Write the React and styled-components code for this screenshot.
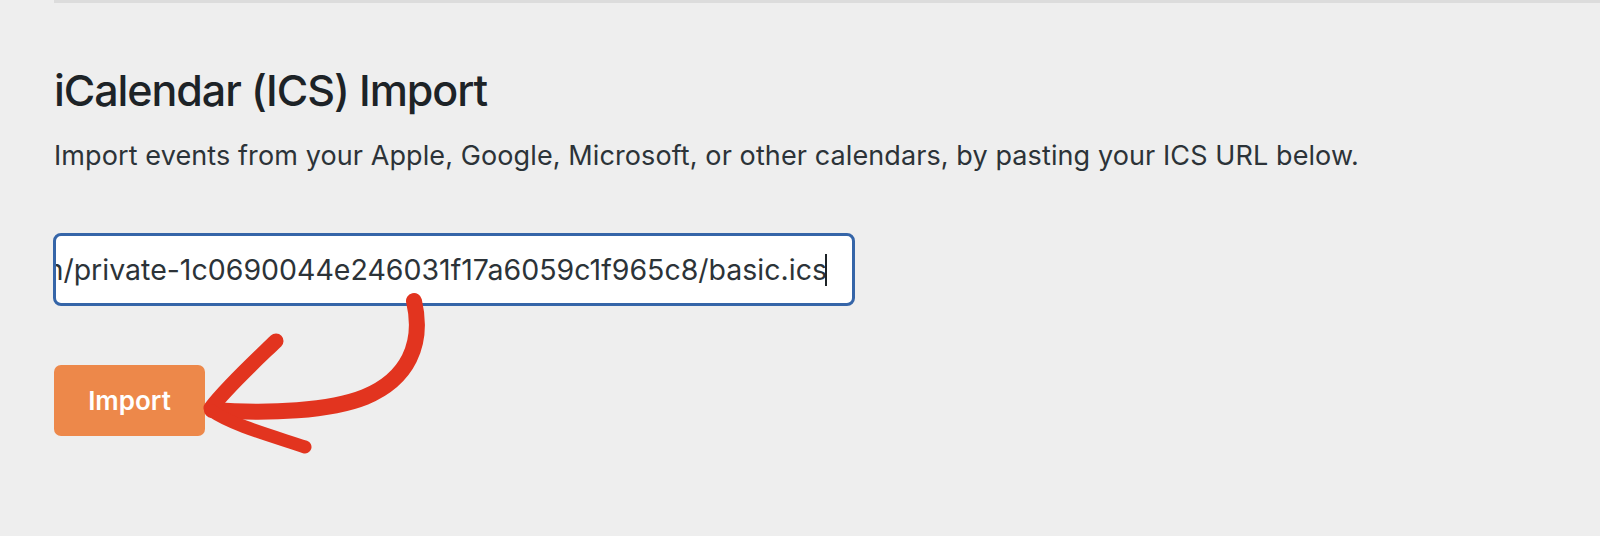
import React from "react";
import styled, { createGlobalStyle } from "styled-components";

const GlobalStyle = createGlobalStyle`
  html, body {
    margin: 0;
    background: #eeeeee;
  }
  body {
    font-family: Inter, "Noto Sans", "Liberation Sans", sans-serif;
    color: #1d2327;
  }
`;

const Page = styled.div`
  padding-left: 54px;
  min-height: 536px;
  box-sizing: border-box;
`;

const Section = styled.section`
  border-top: 3px solid #dcdcdc;
  padding-top: 61px;
`;

const Title = styled.h2`
  margin: 0;
  font-size: 43px;
  line-height: 52px;
  font-weight: 500;
  letter-spacing: -0.025em;
  color: #1d2327;
`;

const Description = styled.p`
  margin: 23px 0 0;
  font-size: 27px;
  line-height: 34px;
  letter-spacing: 0.1px;
  color: #2c3338;
`;

const Form = styled.div`
  position: relative;
  margin-top: 60px;
  display: flex;
  flex-direction: column;
  align-items: flex-start;
  gap: 59px;
`;

const UrlField = styled.div`
  box-sizing: border-box;
  width: 802px;
  height: 73px;
  margin-left: -1px;
  border: 3px solid #3565a8;
  border-radius: 8px;
  background: #ffffff;
  padding: 0 25px 0 4px;
  display: flex;
  align-items: center;
  justify-content: flex-end;
  overflow: hidden;
`;

const UrlText = styled.span`
  white-space: nowrap;
  font-size: 28.5px;
  color: #2c3338;
`;

const Caret = styled.span`
  flex: none;
  width: 2px;
  height: 32px;
  margin-left: -2px;
  background: #1d2327;
`;

const Button = styled.button`
  width: 151px;
  height: 71px;
  border: none;
  border-radius: 7px;
  background: #ed884a;
  color: #ffffff;
  font-family: inherit;
  font-size: 26px;
  font-weight: 600;
  cursor: pointer;
`;

const Arrow = styled.svg`
  position: absolute;
  left: 0;
  top: 0;
  width: 400px;
  height: 230px;
  pointer-events: none;
`;

const url =
  "https://calendar.google.com/calendar/ical/team%40example.com/private-1c0690044e246031f17a6059c1f965c8/basic.ics";

export default function App() {
  return (
    <>
      <GlobalStyle />
      <Page>
        <Section>
          <Title>iCalendar (ICS) Import</Title>
          <Description>
            Import events from your Apple, Google, Microsoft, or other calendars, by pasting your ICS URL below.
          </Description>
          <Form>
            <UrlField>
              <UrlText>{url}</UrlText>
              <Caret />
            </UrlField>
            <Button>Import</Button>
            {/* hand-drawn pointer from the field down to the button */}
            <Arrow viewBox="54 234 400 230">
              <g fill="none" stroke="#e2341f" strokeLinecap="round" strokeLinejoin="round">
                <path d="M414 302 C424 345 408 380 365 398 C330 412 270 415 212 411" strokeWidth="16" />
                <path d="M276 342 C251 366 227 388 211 409" strokeWidth="15" />
                <path d="M212 412 C232 426 272 437 305 448" strokeWidth="13" />
              </g>
            </Arrow>
          </Form>
        </Section>
      </Page>
    </>
  );
}
